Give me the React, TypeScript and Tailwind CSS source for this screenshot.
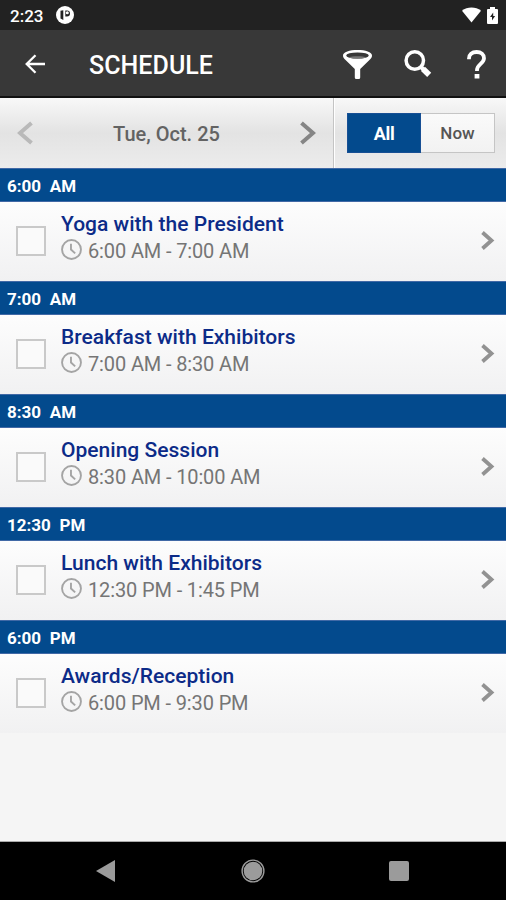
const sessions = [
  { slot: '6:00 AM', title: 'Yoga with the President', time: '6:00 AM - 7:00 AM' },
  { slot: '7:00 AM', title: 'Breakfast with Exhibitors', time: '7:00 AM - 8:30 AM' },
  { slot: '8:30 AM', title: 'Opening Session', time: '8:30 AM - 10:00 AM' },
  { slot: '12:30 PM', title: 'Lunch with Exhibitors', time: '12:30 PM - 1:45 PM' },
  { slot: '6:00 PM', title: 'Awards/Reception', time: '6:00 PM - 9:30 PM' },
];

function StatusBar() {
  return (
    <div className="flex h-[30px] items-center bg-[#222222] pl-[10px] pr-[8px] text-white">
      <span className="w-[46px] pt-[2px] text-[17px] font-medium leading-none">2:23</span>
      <svg className="size-[18px]" viewBox="0 0 18 18">
        <circle cx="9" cy="9" r="9" fill="#fff" />
        <path d="M4.500 4.800 7.300 4.300V14L4.500 12.500Z" fill="#222" />
        <path d="M9.300 4.500h1.700a3 3 0 0 1 0 6H9.300Z" fill="#222" />
        <circle cx="11.300" cy="6.700" r="1.500" fill="#fff" />
      </svg>
      <svg className="ml-auto h-[16px] w-[19px]" viewBox="0 0 20 16">
        <path d="M0 3.600C5.500-1 14.500-1 20 3.600L10 16Z" fill="#fff" />
      </svg>
      <svg className="ml-[6px] h-[17px] w-[11px]" viewBox="0 0 11 17">
        <path d="M3 0h5v2h2a1 1 0 0 1 1 1v13a1 1 0 0 1-1 1H1a1 1 0 0 1-1-1V3a1 1 0 0 1 1-1h2Z" fill="#fff" />
        <path d="M6.200 5.500 3 10h2v3.600L8.100 9H6.200Z" fill="#222" />
      </svg>
    </div>
  );
}

function AppBar() {
  return (
    <header className="flex h-[68px] items-center border-b-2 border-[#111] bg-[#383838] pl-[25px] pr-[20px] pt-[2px] text-white">
      <svg className="h-[20px] w-[20px]" viewBox="0 0 20 20" fill="none" stroke="#fff" strokeWidth="2.300">
        <path d="M10.500 1.200 1.700 10l8.800 8.800M1.700 10H20" />
      </svg>
      <h1 className="ml-[44px] pt-[3px] text-[25px] font-medium leading-none tracking-[0.05px]">SCHEDULE</h1>
      <svg className="ml-auto h-[29px] w-[29px]" viewBox="0 0 29 29">
        <path d="M0 5.500C0 2 6.500 0 14.500 0S29 2 29 5.500c0 1.700-.8 3-2.300 4.300L17.200 19v8.500a1.500 1.500 0 0 1-1.500 1.500h-2.400a1.500 1.500 0 0 1-1.500-1.500V19L2.300 9.800C.8 8.500 0 7.200 0 5.500Z" fill="#fff" />
        <ellipse cx="14.500" cy="5.500" rx="11.300" ry="3.100" fill="#383838" />
        <path d="M5 7.500c5 1.500 14 1.500 19 0-4.500-1.800-14.500-1.800-19 0Z" fill="#777" />
      </svg>
      <svg className="ml-[32px] h-[28px] w-[28px]" viewBox="0 0 28 28" fill="none" stroke="#fff">
        <circle cx="10.800" cy="10.500" r="8.700" strokeWidth="3.500" />
        <path d="m17 17 3 3" strokeWidth="4" />
        <path d="m19 18.800 6.200 6" strokeWidth="5.800" />
      </svg>
      <svg className="ml-[35px] h-[29px] w-[19px]" viewBox="0 0 19 29" fill="none" stroke="#fff" strokeWidth="3.800">
        <path d="M2 9.200V8.500C2 4.500 5 2 9.600 2S17 4.600 17 8.200c0 5.300-7 6-7 11.800v1" />
        <path d="M10 24V28.500" strokeWidth="4.800" />
      </svg>
    </header>
  );
}

function DateBar() {
  return (
    <div className="flex h-[70px] bg-linear-to-b from-[#f8f8f8] via-[#e3e3e3] to-[#ececec]">
      <div className="flex w-[334px] items-center justify-between border-r border-[#c4c4c4] pl-[17px] pr-[17px]">
        <svg className="h-[24px] w-[16px]" viewBox="0 0 16 24" fill="none" stroke="#b9b9b9" strokeWidth="4">
          <path d="M14.500 2 3 12l11.500 10" />
        </svg>
        <span className="pt-px text-[20px] font-medium text-[#636363]">Tue, Oct. 25</span>
        <svg className="h-[24px] w-[16px]" viewBox="0 0 16 24" fill="none" stroke="#858585" strokeWidth="4">
          <path d="M1.500 2 13 12 1.500 22" />
        </svg>
      </div>
      <div className="flex flex-1 items-center border-l border-white pl-[12px]">
        <button className="h-[40px] w-[74px] border border-[#174f94] bg-[#034a8d] pt-px text-[18px] font-bold tracking-[-0.3px] text-white">All</button>
        <button className="h-[40px] w-[74px] border border-l-0 border-[#c5c5c5] bg-linear-to-b from-[#fafafa] to-[#f2f2f2] pt-px text-[17px] font-medium text-[#555]">Now</button>
      </div>
    </div>
  );
}

function Session({ slot, title, time }: { slot: string; title: string; time: string }) {
  return (
    <section className="h-[113px]">
      <h2 className="flex h-[34px] items-center border-y border-y-[#4169a6] bg-[#034a8d] pl-[7px] pt-[3px] text-[17px] font-bold text-white [word-spacing:4.500px]">{slot}</h2>
      <div className="flex h-[79px] items-center bg-linear-to-b from-[#fdfdfd] to-[#f1f1f2] pl-[16px] pr-[11px]">
        <span className="mt-[-2px] size-[30px] border-2 border-[#c9c9c9] bg-[#fafafa]" />
        <div className="ml-[15px] h-[79px] flex-1 pt-[9px]">
          <h3 className="text-[21px] font-medium leading-[27px] tracking-[0.02px] text-[#0c2b88]">{title}</h3>
          <p className="flex items-center text-[20px] leading-[27px] tracking-[-0.13px] text-[#757575]">
            <svg className="mr-[6px] mt-[-5px] size-[21px]" viewBox="0 0 20 20" fill="none" stroke="#a4a4a4" strokeWidth="1.800">
              <circle cx="10" cy="10" r="9" />
              <path d="M9.500 4.500V10l4 3.700" />
            </svg>
            <span>{time}</span>
          </p>
        </div>
        <svg className="mt-[-2px] h-[19px] w-[14px]" viewBox="0 0 14 19" fill="none" stroke="#929292" strokeWidth="3.800">
          <path d="m1.500 1.500 9 8-9 8" />
        </svg>
      </div>
    </section>
  );
}

function NavBar() {
  return (
    <nav className="flex h-[58px] items-center justify-between bg-black pl-[96px] pr-[97px] text-[#9b9b9b]">
      <svg className="h-[22px] w-[19px]" viewBox="0 0 19 22"><path d="M0 11 19 0v22Z" fill="currentColor" /></svg>
      <svg className="ml-[2px] size-[24px]" viewBox="0 0 24 24" fill="currentColor">
        <circle cx="12" cy="12" r="9.300" />
        <circle cx="12" cy="12" r="10.900" fill="none" stroke="currentColor" strokeWidth="1.400" />
      </svg>
      <span className="size-[20px] rounded-[2px] bg-[#9b9b9b]" />
    </nav>
  );
}

export default function App() {
  return (
    <div className="flex h-[900px] w-[506px] flex-col overflow-hidden bg-[#f5f5f5] font-[Roboto,sans-serif]">
      <StatusBar />
      <AppBar />
      <DateBar />
      <main className="flex-1 border-b border-[#aaa]">
        {sessions.map((session) => <Session key={session.slot} {...session} />)}
      </main>
      <NavBar />
    </div>
  );
}
